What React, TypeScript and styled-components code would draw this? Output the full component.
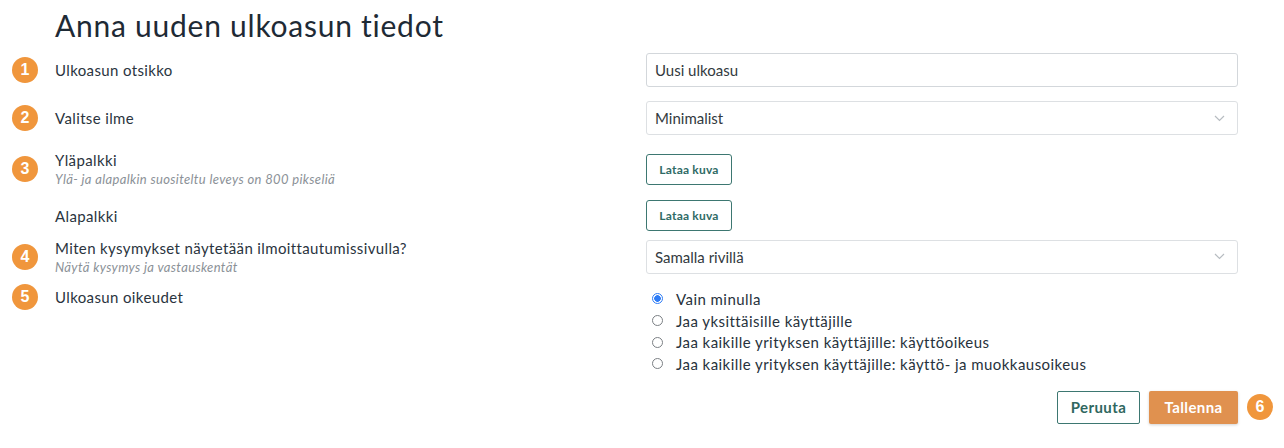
import styled, { createGlobalStyle } from 'styled-components';

const GlobalStyle = createGlobalStyle`
  html, body {
    margin: 0;
    padding: 0;
    background: #ffffff;
  }
  body {
    font-family: 'Lato', 'Open Sans', sans-serif;
    color: #27323c;
  }
`;

// ========== STYLES ==========

const Page = styled.div`
  width: 1284px;
  height: 448px;
  box-sizing: border-box;
  padding: 7px 11px 0 12px;
`;

const Title = styled.h1`
  margin: 0 0 0 43px;
  font-family: 'Lato', sans-serif;
  font-size: 30px;
  line-height: 36px;
  font-weight: 400;
  color: #1e2a35;
  letter-spacing: 0.75px;
`;

const Row = styled.div<{ $gap: number; $align?: string }>`
  display: grid;
  grid-template-columns: 634px 592px;
  align-items: ${p => p.$align || 'center'};
  margin-top: ${p => p.$gap}px;
  padding-right: 35px;
`;

const LabelCell = styled.div`
  display: flex;
  align-items: center;
  gap: 17px;
`;

const Badge = styled.span<{ $hidden?: boolean }>`
  flex-shrink: 0;
  width: 26px;
  height: 26px;
  border-radius: 50%;
  background: #f0963c;
  color: #fff;
  font-family: 'Liberation Sans', Arial, sans-serif;
  font-weight: 700;
  font-size: 16px;
  display: flex;
  align-items: center;
  justify-content: center;
  visibility: ${p => (p.$hidden ? 'hidden' : 'visible')};
`;

const LabelBlock = styled.div`
  display: flex;
  flex-direction: column;
  gap: 3px;
`;

const Label = styled.span`
  font-size: 15px;
  line-height: 18px;
  letter-spacing: 0.37px;
  color: #2a343e;
`;

const Hint = styled.span`
  font-size: 13px;
  line-height: 14px;
  font-style: italic;
  letter-spacing: 0.35px;
  color: #8b9197;
`;

const FieldCell = styled.div<{ $pad?: number }>`
  padding-top: ${p => p.$pad || 0}px;
`;

const TextInput = styled.div`
  height: 34px;
  box-sizing: border-box;
  border: 1px solid #d3d7db;
  border-radius: 3px;
  padding: 0 8px;
  display: flex;
  align-items: center;
  font-size: 15px;
  color: #333a40;
`;

const Select = styled(TextInput)`
  justify-content: space-between;
  padding-right: 12px;
  border-color: #dde0e3;
`;

const UploadButton = styled.button`
  height: 31px;
  width: 86px;
  box-sizing: border-box;
  border: 1px solid #3d7771;
  border-radius: 3px;
  background: #fff;
  font-family: 'Lato', sans-serif;
  font-size: 12px;
  font-weight: 700;
  letter-spacing: 0.2px;
  color: #2f6b66;
  padding: 0;
  cursor: pointer;
`;

const RadioList = styled.div`
  display: flex;
  flex-direction: column;
  padding: 4px 0 0 6px;
`;

const RadioItem = styled.label`
  display: flex;
  align-items: center;
  gap: 13px;
  height: 21.7px;
  font-size: 15px;
  letter-spacing: 0.45px;
  color: #27323c;
  cursor: pointer;
`;

const RadioDot = styled.span<{ $checked: boolean }>`
  width: 11px;
  height: 11px;
  box-sizing: border-box;
  border-radius: 50%;
  border: 1px solid ${p => (p.$checked ? '#2f7df6' : '#7b7f84')};
  background: ${p => (p.$checked ? 'radial-gradient(circle, #2f7df6 0 3px, #fff 3.6px)' : '#fff')};
  flex-shrink: 0;
`;

const Footer = styled.div`
  display: flex;
  justify-content: flex-end;
  align-items: center;
  gap: 9px;
  margin-top: 16px;
`;

const SecondaryButton = styled.button`
  height: 33px;
  width: 83px;
  box-sizing: border-box;
  border: 1px solid #3d7771;
  border-radius: 2px;
  background: #fff;
  font-family: 'Lato', sans-serif;
  font-size: 15px;
  font-weight: 700;
  color: #2f6760;
  padding: 0;
  letter-spacing: 0.4px;
`;

const PrimaryButton = styled.button`
  height: 33px;
  width: 89px;
  border: none;
  border-radius: 2px;
  background: #e0914f;
  box-shadow: 0 1px 3px rgba(0, 0, 0, 0.18);
  font-family: 'Lato', sans-serif;
  font-size: 15px;
  font-weight: 700;
  color: #fff;
  padding: 0;
  letter-spacing: 0.4px;
`;

// ========== ICONS ==========

const Chevron = () => (
  <svg width="11" height="7" viewBox="0 0 11 7" fill="none" stroke="#b7bcc1" strokeWidth="1.2">
    <path d="M1 1l4.5 4.5L10 1" />
  </svg>
);

// ========== COMPONENT ==========

const RADIOS = [
  'Vain minulla',
  'Jaa yksittäisille käyttäjille',
  'Jaa kaikille yrityksen käyttäjille: käyttöoikeus',
  'Jaa kaikille yrityksen käyttäjille: käyttö- ja muokkausoikeus',
];

export default function App() {
  return (
    <>
      <GlobalStyle />
      <Page>
        <Title>Anna uuden ulkoasun tiedot</Title>

        <Row $gap={10}>
          <LabelCell>
            <Badge>1</Badge>
            <Label>Ulkoasun otsikko</Label>
          </LabelCell>
          <FieldCell>
            <TextInput>Uusi ulkoasu</TextInput>
          </FieldCell>
        </Row>

        <Row $gap={14}>
          <LabelCell>
            <Badge>2</Badge>
            <Label>Valitse ilme</Label>
          </LabelCell>
          <FieldCell>
            <Select>
              Minimalist
              <Chevron />
            </Select>
          </FieldCell>
        </Row>

        <Row $gap={16} $align="start">
          <LabelCell>
            <Badge>3</Badge>
            <LabelBlock>
              <Label>Yläpalkki</Label>
              <Hint>Ylä- ja alapalkin suositeltu leveys on 800 pikseliä</Hint>
            </LabelBlock>
          </LabelCell>
          <FieldCell $pad={3}>
            <UploadButton>Lataa kuva</UploadButton>
          </FieldCell>
        </Row>

        <Row $gap={14}>
          <LabelCell>
            <Badge $hidden />
            <Label>Alapalkki</Label>
          </LabelCell>
          <FieldCell>
            <UploadButton>Lataa kuva</UploadButton>
          </FieldCell>
        </Row>

        <Row $gap={8}>
          <LabelCell>
            <Badge>4</Badge>
            <LabelBlock>
              <Label>Miten kysymykset näytetään ilmoittautumissivulla?</Label>
              <Hint>Näytä kysymys ja vastauskentät</Hint>
            </LabelBlock>
          </LabelCell>
          <FieldCell>
            <Select>
              Samalla rivillä
              <Chevron />
            </Select>
          </FieldCell>
        </Row>

        <Row $gap={10} $align="start">
          <LabelCell>
            <Badge>5</Badge>
            <Label>Ulkoasun oikeudet</Label>
          </LabelCell>
          <RadioList>
            {RADIOS.map((text, idx) => (
              <RadioItem key={text}>
                <RadioDot $checked={idx === 0} />
                {text}
              </RadioItem>
            ))}
          </RadioList>
        </Row>

        <Footer>
          <SecondaryButton>Peruuta</SecondaryButton>
          <PrimaryButton>Tallenna</PrimaryButton>
          <Badge>6</Badge>
        </Footer>
      </Page>
    </>
  );
}
